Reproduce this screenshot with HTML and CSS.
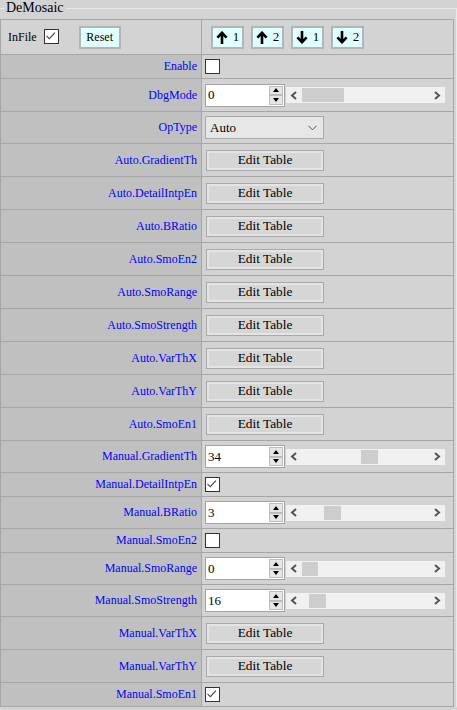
FILE: index.html
```html
<!DOCTYPE html>
<html lang="en">
<head>
	<meta charset="UTF-8">
	<title>DeMosaic</title>
	<link rel="stylesheet" href="styles.css">
</head>
<body>
<fieldset class="panel">
	<legend>DeMosaic</legend>
	<table class="grid">
		<tr class="r-head">
			<td class="head-left">
				<span class="infile">InFile</span>
				<span class="cb"><svg width="11" height="11" viewBox="0 0 11 11"><path d="M1.5 5.8L4.3 8.6L10 2.6" fill="none" stroke="#4a4a4a" stroke-width="1.2"/></svg></span>
				<button class="btn-cyan reset">Reset</button>
			</td>
			<td>
				<div class="steps">
					<button class="btn-cyan step"><svg width="12" height="13" viewBox="0 0 12 13"><path d="M6 13V2.2M1.4 6.6L6 1.8L10.6 6.6" fill="none" stroke="#000" stroke-width="2.6"/></svg><span>1</span></button>
					<button class="btn-cyan step"><svg width="12" height="13" viewBox="0 0 12 13"><path d="M6 13V2.2M1.4 6.6L6 1.8L10.6 6.6" fill="none" stroke="#000" stroke-width="2.6"/></svg><span>2</span></button>
					<button class="btn-cyan step"><svg width="12" height="13" viewBox="0 0 12 13"><path d="M6 0V10.8M1.4 6.4L6 11.2L10.6 6.4" fill="none" stroke="#000" stroke-width="2.6"/></svg><span>1</span></button>
					<button class="btn-cyan step"><svg width="12" height="13" viewBox="0 0 12 13"><path d="M6 0V10.8M1.4 6.4L6 11.2L10.6 6.4" fill="none" stroke="#000" stroke-width="2.6"/></svg><span>2</span></button>
				</div>
			</td>
		</tr>
		<tr class="r-cb">
			<th>Enable</th>
			<td><span class="cb"></span></td>
		</tr>
		<tr class="r-num r-first">
			<th>DbgMode</th>
			<td>
				<div class="num-line">
					<div class="num"><span class="num-val">0</span><span class="spin"><span class="spin-btn"><i class="tri-up"></i></span><span class="spin-btn"><i class="tri-down"></i></span></span></div>
					<div class="hscroll"><span class="arr"><svg width="8" height="9" viewBox="0 0 8 9"><path d="M6 1L2 4.5L6 8" fill="none" stroke="#555" stroke-width="2"/></svg></span><span class="track"><span class="thumb" style="margin-left:0px;width:42px"></span></span><span class="arr"><svg width="8" height="9" viewBox="0 0 8 9"><path d="M2 1L6 4.5L2 8" fill="none" stroke="#555" stroke-width="2"/></svg></span></div>
				</div>
			</td>
		</tr>
		<tr class="r-sel">
			<th>OpType</th>
			<td><div class="select"><span>Auto</span><svg width="9" height="6" viewBox="0 0 9 6"><path d="M0.5 0.8L4.5 4.8L8.5 0.8" fill="none" stroke="#555" stroke-width="1"/></svg></div></td>
		</tr>
		<tr class="r-edit"><th>Auto.GradientTh</th><td><button class="btn-edit">Edit Table</button></td></tr>
		<tr class="r-edit"><th>Auto.DetailIntpEn</th><td><button class="btn-edit">Edit Table</button></td></tr>
		<tr class="r-edit"><th>Auto.BRatio</th><td><button class="btn-edit">Edit Table</button></td></tr>
		<tr class="r-edit"><th>Auto.SmoEn2</th><td><button class="btn-edit">Edit Table</button></td></tr>
		<tr class="r-edit"><th>Auto.SmoRange</th><td><button class="btn-edit">Edit Table</button></td></tr>
		<tr class="r-edit"><th>Auto.SmoStrength</th><td><button class="btn-edit">Edit Table</button></td></tr>
		<tr class="r-edit"><th>Auto.VarThX</th><td><button class="btn-edit">Edit Table</button></td></tr>
		<tr class="r-edit"><th>Auto.VarThY</th><td><button class="btn-edit">Edit Table</button></td></tr>
		<tr class="r-edit"><th>Auto.SmoEn1</th><td><button class="btn-edit">Edit Table</button></td></tr>
		<tr class="r-num">
			<th>Manual.GradientTh</th>
			<td>
				<div class="num-line">
					<div class="num"><span class="num-val">34</span><span class="spin"><span class="spin-btn"><i class="tri-up"></i></span><span class="spin-btn"><i class="tri-down"></i></span></span></div>
					<div class="hscroll"><span class="arr"><svg width="8" height="9" viewBox="0 0 8 9"><path d="M6 1L2 4.5L6 8" fill="none" stroke="#555" stroke-width="2"/></svg></span><span class="track"><span class="thumb" style="margin-left:59px;width:17px"></span></span><span class="arr"><svg width="8" height="9" viewBox="0 0 8 9"><path d="M2 1L6 4.5L2 8" fill="none" stroke="#555" stroke-width="2"/></svg></span></div>
				</div>
			</td>
		</tr>
		<tr class="r-cb">
			<th>Manual.DetailIntpEn</th>
			<td><span class="cb"><svg width="11" height="11" viewBox="0 0 11 11"><path d="M1.5 5.8L4.3 8.6L10 2.6" fill="none" stroke="#4a4a4a" stroke-width="1.2"/></svg></span></td>
		</tr>
		<tr class="r-num">
			<th>Manual.BRatio</th>
			<td>
				<div class="num-line">
					<div class="num"><span class="num-val">3</span><span class="spin"><span class="spin-btn"><i class="tri-up"></i></span><span class="spin-btn"><i class="tri-down"></i></span></span></div>
					<div class="hscroll"><span class="arr"><svg width="8" height="9" viewBox="0 0 8 9"><path d="M6 1L2 4.5L6 8" fill="none" stroke="#555" stroke-width="2"/></svg></span><span class="track"><span class="thumb" style="margin-left:22px;width:17px"></span></span><span class="arr"><svg width="8" height="9" viewBox="0 0 8 9"><path d="M2 1L6 4.5L2 8" fill="none" stroke="#555" stroke-width="2"/></svg></span></div>
				</div>
			</td>
		</tr>
		<tr class="r-cb">
			<th>Manual.SmoEn2</th>
			<td><span class="cb"></span></td>
		</tr>
		<tr class="r-num">
			<th>Manual.SmoRange</th>
			<td>
				<div class="num-line">
					<div class="num"><span class="num-val">0</span><span class="spin"><span class="spin-btn"><i class="tri-up"></i></span><span class="spin-btn"><i class="tri-down"></i></span></span></div>
					<div class="hscroll"><span class="arr"><svg width="8" height="9" viewBox="0 0 8 9"><path d="M6 1L2 4.5L6 8" fill="none" stroke="#555" stroke-width="2"/></svg></span><span class="track"><span class="thumb" style="margin-left:0px;width:16px"></span></span><span class="arr"><svg width="8" height="9" viewBox="0 0 8 9"><path d="M2 1L6 4.5L2 8" fill="none" stroke="#555" stroke-width="2"/></svg></span></div>
				</div>
			</td>
		</tr>
		<tr class="r-num">
			<th>Manual.SmoStrength</th>
			<td>
				<div class="num-line">
					<div class="num"><span class="num-val">16</span><span class="spin"><span class="spin-btn"><i class="tri-up"></i></span><span class="spin-btn"><i class="tri-down"></i></span></span></div>
					<div class="hscroll"><span class="arr"><svg width="8" height="9" viewBox="0 0 8 9"><path d="M6 1L2 4.5L6 8" fill="none" stroke="#555" stroke-width="2"/></svg></span><span class="track"><span class="thumb" style="margin-left:7px;width:17px"></span></span><span class="arr"><svg width="8" height="9" viewBox="0 0 8 9"><path d="M2 1L6 4.5L2 8" fill="none" stroke="#555" stroke-width="2"/></svg></span></div>
				</div>
			</td>
		</tr>
		<tr class="r-edit"><th>Manual.VarThX</th><td><button class="btn-edit">Edit Table</button></td></tr>
		<tr class="r-edit"><th>Manual.VarThY</th><td><button class="btn-edit">Edit Table</button></td></tr>
		<tr class="r-cb">
			<th>Manual.SmoEn1</th>
			<td><span class="cb"><svg width="11" height="11" viewBox="0 0 11 11"><path d="M1.5 5.8L4.3 8.6L10 2.6" fill="none" stroke="#4a4a4a" stroke-width="1.2"/></svg></span></td>
		</tr>
	</table>
</fieldset>
</body>
</html>
```
FILE: styles.css
```css
* {
	margin: 0;
	padding: 0;
}
body {
	background: #d3d3d3;
	font-family: "Liberation Serif", "Times New Roman", serif;
	color: #000;
}
.panel {
	margin: 0;
	padding: 3px 2px 0 0;
	border: 1px solid #e9e9e9;
	border-left: 0;
	border-bottom: 0;
	min-width: 0;
}
.panel legend {
	margin-left: 4px;
	padding: 0 2px;
	font-size: 14px;
	line-height: 16px;
}
.grid {
	width: 100%;
	border-collapse: collapse;
}
.grid th, .grid td {
	border: 1px solid #a6a6a6;
	padding: 0 0 0 3px;
	background: #d3d3d3;
	text-align: left;
	vertical-align: middle;
}
.grid th {
	width: 196px;
	padding: 0 4px 0 0;
	background: #c0c0c0;
	color: #0000ff;
	font-weight: normal;
	font-size: 12px;
	text-align: right;
}
.r-head td { height: 34px; }
.r-cb th, .r-cb td { height: 23px; }
.r-num th, .r-num td { height: 31px; }
.r-first th, .r-first td { height: 32px; }
.r-sel th, .r-sel td { height: 31px; }
.r-edit th, .r-edit td { height: 32px; }

.head-left {
	padding-left: 7px !important;
	font-size: 12px;
}
.head-left .infile { vertical-align: middle; }
.head-left .cb { margin: 0 17px 0 4px; }

.cb {
	display: inline-block;
	width: 13px;
	height: 13px;
	border: 1px solid #333;
	background: #fff;
	vertical-align: middle;
	position: relative;
	top: -1px;
}
.cb svg { display: block; }

.btn-cyan {
	background: #e0ffff;
	border: 2px solid #b4b4b4;
	font-family: "Liberation Serif", "Times New Roman", serif;
	color: #000;
	vertical-align: middle;
}
.reset {
	width: 42px;
	height: 23px;
	font-size: 12px;
}
.steps {
	display: flex;
	gap: 7px;
	padding-left: 6px;
}
.step {
	width: 33px;
	height: 23px;
	display: flex;
	align-items: center;
	justify-content: center;
	gap: 5px;
	font-size: 13px;
}
.step svg { display: block; }

.num-line {
	display: flex;
	align-items: center;
	gap: 1px;
}
.num {
	width: 80px;
	height: 23px;
	border: 1px solid #a3a3a3;
	background: #fff;
	display: flex;
	align-items: center;
	justify-content: space-between;
	padding: 0 1px 0 1px;
	box-sizing: border-box;
}
.num-val {
	font-size: 13px;
	padding-left: 1px;
}
.spin {
	display: flex;
	flex-direction: column;
	width: 14px;
	height: 19px;
}
.spin-btn {
	flex: 1;
	background: #e6e6e6;
	border: 1px solid #bdbdbd;
	display: flex;
	align-items: center;
	justify-content: center;
}
.tri-up, .tri-down {
	width: 0;
	height: 0;
	border-left: 3.5px solid transparent;
	border-right: 3.5px solid transparent;
}
.tri-up { border-bottom: 4px solid #000; }
.tri-down { border-top: 4px solid #000; }

.hscroll {
	width: 159px;
	height: 16px;
	background: #f0f0f0;
	display: flex;
	align-items: center;
}
.arr {
	width: 16px;
	display: flex;
	justify-content: center;
}
.arr svg { display: block; }
.track {
	flex: 1;
	height: 100%;
	display: flex;
	align-items: center;
}
.thumb {
	height: 14px;
	background: #cdcdcd;
}

.select {
	width: 119px;
	height: 23px;
	border: 1px solid #a9a9a9;
	background: #e6e6e6;
	display: flex;
	align-items: center;
	justify-content: space-between;
	padding: 0 6px 0 4px;
	box-sizing: border-box;
	font-size: 13px;
}

.btn-edit {
	margin-left: 1px;
	width: 118px;
	height: 21px;
	border: 1px solid #a9a9a9;
	box-shadow: inset 0 0 0 2px #e4e4e4;
	background: #d6d6d6;
	font-family: "Liberation Serif", "Times New Roman", serif;
	font-size: 13.33px;
	color: #000;
	vertical-align: middle;
}
```
